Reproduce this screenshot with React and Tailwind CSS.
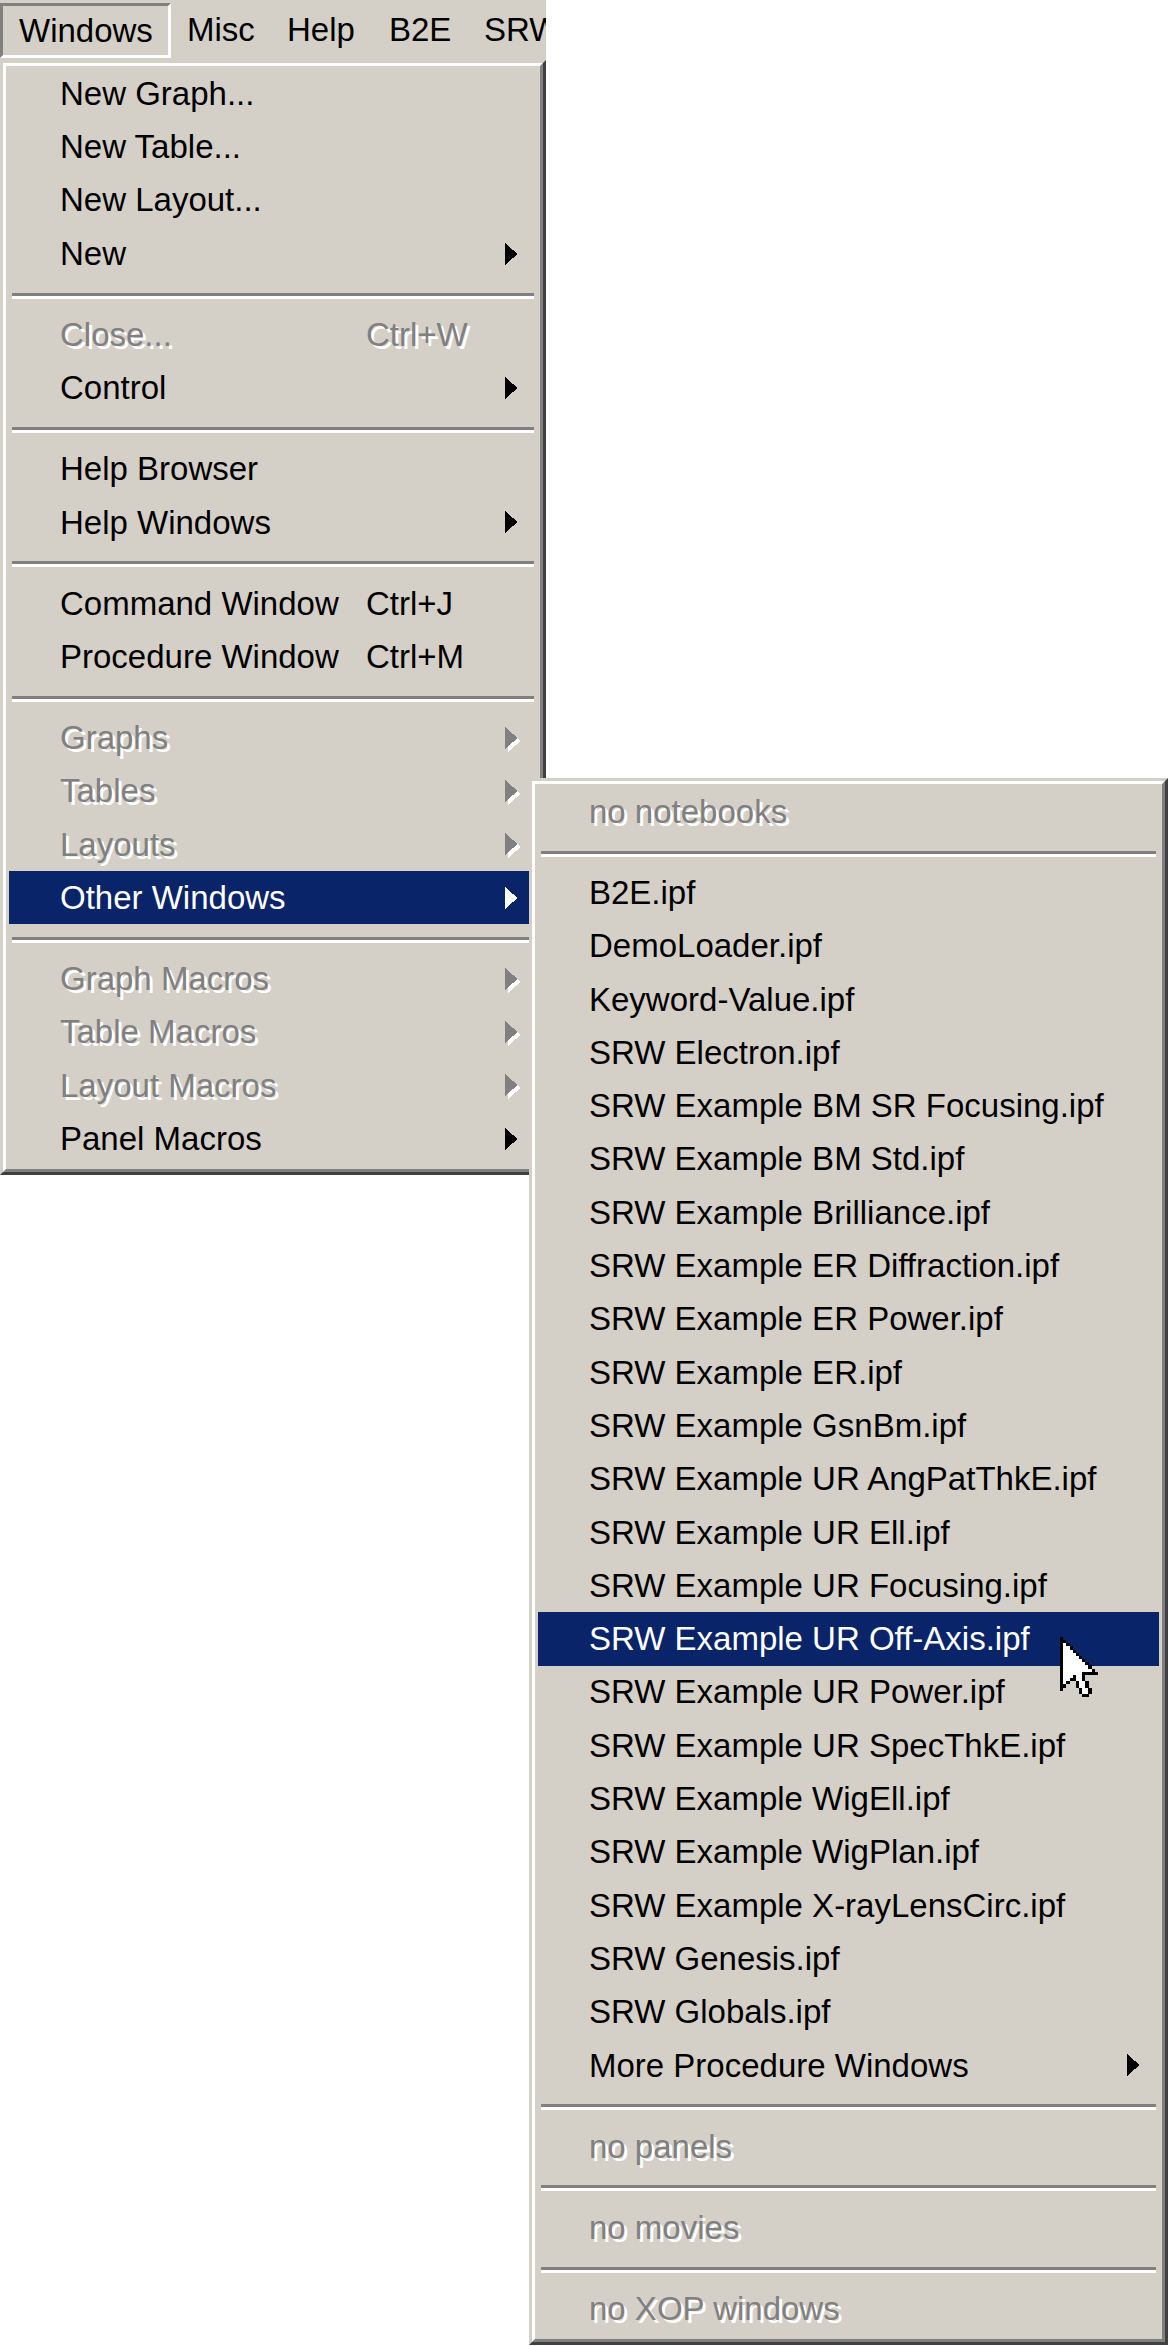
import React from "react";

const FONT = "[font-family:'Liberation_Sans',Arial,sans-serif]";

const mainItems = [
  { l: "New Graph..." },
  { l: "New Table..." },
  { l: "New Layout..." },
  { l: "New", a: true },
  "sep",
  { l: "Close...", s: "Ctrl+W", d: true },
  { l: "Control", a: true },
  "sep",
  { l: "Help Browser" },
  { l: "Help Windows", a: true },
  "sep",
  { l: "Command Window", s: "Ctrl+J" },
  { l: "Procedure Window", s: "Ctrl+M" },
  "sep",
  { l: "Graphs", a: true, d: true },
  { l: "Tables", a: true, d: true },
  { l: "Layouts", a: true, d: true },
  { l: "Other Windows", a: true, hi: true },
  "sep",
  { l: "Graph Macros", a: true, d: true },
  { l: "Table Macros", a: true, d: true },
  { l: "Layout Macros", a: true, d: true },
  { l: "Panel Macros", a: true },
];

const subItems = [
  { l: "no notebooks", d: true },
  "sep",
  { l: "B2E.ipf" },
  { l: "DemoLoader.ipf" },
  { l: "Keyword-Value.ipf" },
  { l: "SRW Electron.ipf" },
  { l: "SRW Example BM SR Focusing.ipf" },
  { l: "SRW Example BM Std.ipf" },
  { l: "SRW Example Brilliance.ipf" },
  { l: "SRW Example ER Diffraction.ipf" },
  { l: "SRW Example ER Power.ipf" },
  { l: "SRW Example ER.ipf" },
  { l: "SRW Example GsnBm.ipf" },
  { l: "SRW Example UR AngPatThkE.ipf" },
  { l: "SRW Example UR Ell.ipf" },
  { l: "SRW Example UR Focusing.ipf" },
  { l: "SRW Example UR Off-Axis.ipf", hi: true },
  { l: "SRW Example UR Power.ipf" },
  { l: "SRW Example UR SpecThkE.ipf" },
  { l: "SRW Example WigEll.ipf" },
  { l: "SRW Example WigPlan.ipf" },
  { l: "SRW Example X-rayLensCirc.ipf" },
  { l: "SRW Genesis.ipf" },
  { l: "SRW Globals.ipf" },
  { l: "More Procedure Windows", a: true },
  "sep",
  { l: "no panels", d: true },
  "sep",
  { l: "no movies", d: true },
  "sep",
  { l: "no XOP windows", d: true },
];

function Arrow({ disabled, active }) {
  const fill = active ? "#ffffff" : disabled ? "#808080" : "#000000";
  return (
    <svg width="16" height="26" viewBox="0 0 16 26" className="block shrink-0" shapeRendering="crispEdges">
      {disabled && <polygon points="3,3 15.6,14 3,25" fill="#ffffff" />}
      <polygon points="0,0 12.6,11 0,22" fill={fill} />
    </svg>
  );
}

function Sep() {
  return (
    <div className="h-[27.8px] pt-[12.4px] px-[3px]">
      <div className="h-[3px] bg-[#808080]" />
      <div className="h-[3px] bg-white" />
    </div>
  );
}

function Item({ it }) {
  const cls = it.hi
    ? "bg-[#0a246a] text-white"
    : it.d
    ? "text-[#808080] [text-shadow:3px_3px_0_#ffffff]"
    : "text-black";
  return (
    <div className={`flex items-center h-[53.3px] whitespace-nowrap ${cls}`}>
      <span className="pl-[51px] w-[357px] shrink-0">{it.l}</span>
      {it.s && <span>{it.s}</span>}
      {it.a && (
        <span className="ml-auto mr-[16px] mt-[4px]">
          <Arrow disabled={it.d} active={it.hi} />
        </span>
      )}
    </div>
  );
}

function Menu({ items, width }) {
  return (
    <div
      className="border-[3px] border-t-[#d4d0c8] border-l-[#d4d0c8] border-r-[#404040] border-b-[#404040] bg-[#d4d0c8]"
      style={{ width }}
    >
      <div className="border-[3px] border-t-white border-l-white border-r-[#808080] border-b-[#808080] px-[3px] pt-[1px] pb-[4px]">
        {items.map((it, i) => (it === "sep" ? <Sep key={i} /> : <Item key={i} it={it} />))}
      </div>
    </div>
  );
}

const CURSOR = [
  "B...........",
  "BB..........",
  "BWB.........",
  "BWWB........",
  "BWWWB.......",
  "BWWWWB......",
  "BWWWWWB.....",
  "BWWWWWWB....",
  "BWWWWWWWB...",
  "BWWWWWWWWB..",
  "BWWWWWWWWWB.",
  "BWWWWWWBBBBB",
  "BWWWBWWB....",
  "BWWBBWWB....",
  "BWB..BWWB...",
  "BB...BWWB...",
  "B.....BWWB..",
  "......BWWB..",
  ".......BB...",
];

function Cursor() {
  const rects = [];
  CURSOR.forEach((row, y) => {
    row.split("").forEach((c, x) => {
      if (c === "B" || c === "W") {
        rects.push(
          <rect key={`${x}-${y}`} x={x} y={y} width="1.02" height="1.02" fill={c === "B" ? "#000" : "#fff"} />
        );
      }
    });
  });
  return (
    <svg
      width="38"
      height="60"
      viewBox="0 0 12 19"
      className="absolute left-[1060px] top-[1637px]"
      shapeRendering="crispEdges"
    >
      {rects}
    </svg>
  );
}

export default function App() {
  return (
    <div className={`relative w-[1168px] h-[2346px] bg-white overflow-hidden text-[33px] ${FONT}`}>
      {/* menu bar */}
      <div className="flex w-[546px] h-[60px] bg-[#d4d0c8] overflow-hidden whitespace-nowrap text-black">
        <div className="mt-[3px] h-[55px] w-[171px] shrink-0 border-[3px] border-t-[#808080] border-l-[#808080] border-r-white border-b-white flex items-center pl-[16px]">
          Windows
        </div>
        <div className="w-[100px] shrink-0 flex items-center pl-[16px]">Misc</div>
        <div className="w-[102px] shrink-0 flex items-center pl-[16px]">Help</div>
        <div className="w-[95px] shrink-0 flex items-center pl-[16px]">B2E</div>
        <div className="w-[95px] shrink-0 flex items-center pl-[16px]">SRW</div>
      </div>

      {/* main menu */}
      <Menu items={mainItems} width={546} />

      {/* submenu overlay */}
      <div className="absolute left-[529px] top-[778px]">
        <Menu items={subItems} width={639} />
      </div>

      <Cursor />
    </div>
  );
}
